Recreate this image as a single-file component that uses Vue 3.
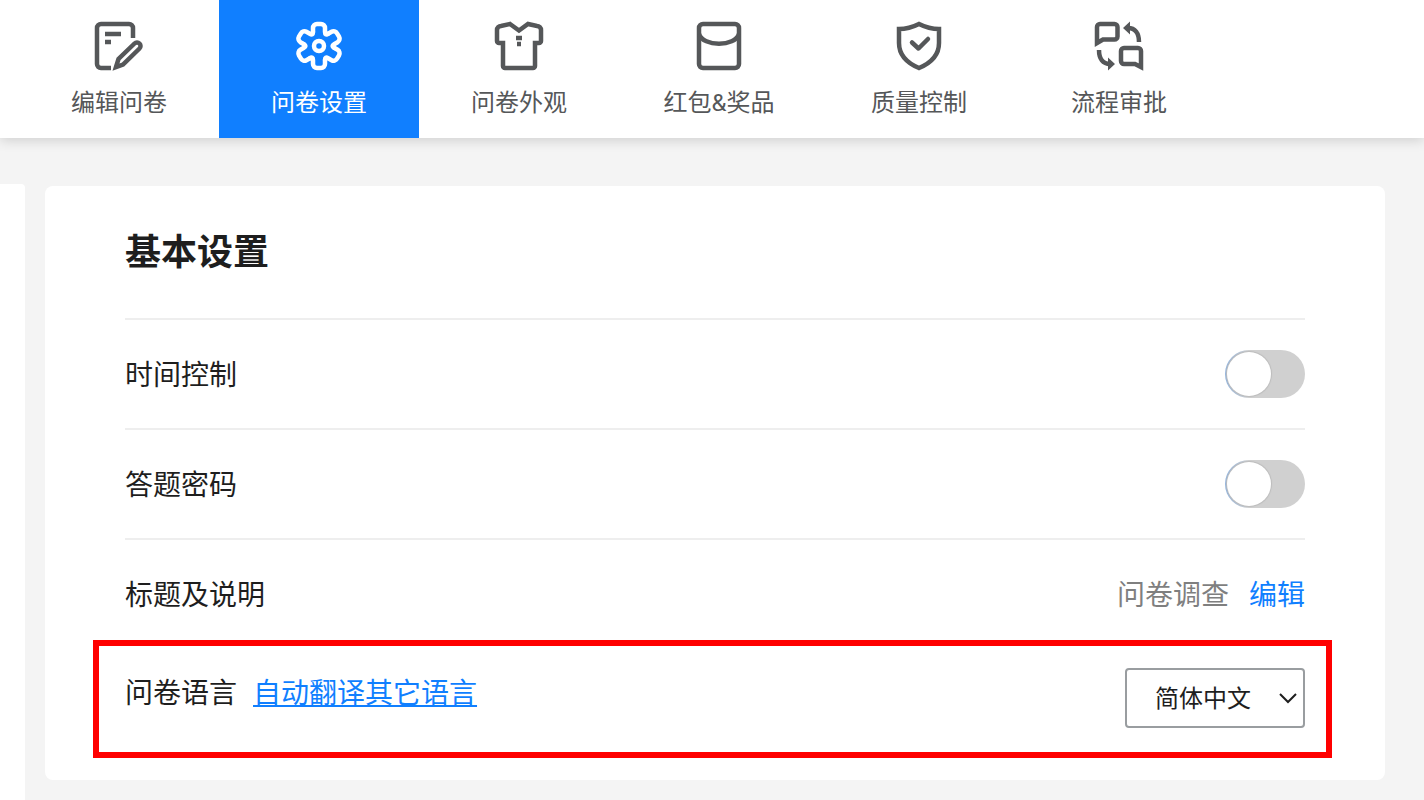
<template>
  <div class="page">
    <nav class="tabs">
      <a
        v-for="tab in tabs"
        :key="tab.id"
        href="#"
        class="tab"
        :class="{ active: tab.id === activeTab }"
        @click.prevent="activeTab = tab.id"
      >
        <svg class="tab-icon" viewBox="0 0 48 48" stroke-width="4.5" aria-hidden="true">
          <g v-if="tab.id === 'edit'">
            <path d="M38 16V6a4 4 0 0 0-4-4H6a4 4 0 0 0-4 4v36a4 4 0 0 0 4 4h10" />
            <path d="M10 12h16M10 20h6" />
            <path d="M21 45l2.500-8 16-15.500a3.500 3.500 0 0 1 5 5L28 42.500z" />
          </g>
          <g v-else-if="tab.id === 'settings'" class="round">
            <path
              v-for="n in 6"
              :key="n"
              :transform="`rotate(${n * 60} 24 24)`"
              d="M18 10V6a4 4 0 0 1 4-4h4a4 4 0 0 1 4 4v4Q30 13.600 33.100 11.800"
            />
            <circle cx="24" cy="24" r="5" />
          </g>
          <g v-else-if="tab.id === 'look'">
            <path d="M15 2l9 6.500L33 2l9 2a4 4 0 0 1 4 4v11a2 2 0 0 1-2 2h-4v23a2 2 0 0 1-2 2H10a2 2 0 0 1-2-2V21H4a2 2 0 0 1-2-2V8a4 4 0 0 1 4-4z" />
            <path d="M21 16h6M22 22h4" />
          </g>
          <g v-else-if="tab.id === 'prize'">
            <rect x="4" y="2" width="40" height="44" rx="4" />
            <path d="M4 12C8 25 40 25 44 12" />
          </g>
          <g v-else-if="tab.id === 'quality'">
            <path d="M24 2C18 5 11 7 4 7v14c0 13 8 20 20 25 12-5 20-12 20-25V7c-7 0-14-2-20-5z" />
            <path class="round" d="M17 20.500l6.500 6L33 17" />
          </g>
          <g v-else>
            <path d="M2 21V5a3 3 0 0 1 3-3h14.500a3 3 0 0 1 3 3v9.500a3 3 0 0 1-3 3H8z" />
            <path d="M46 45V29a3 3 0 0 0-3-3H29a3 3 0 0 0-3 3v10a3 3 0 0 0 3 3h11z" />
            <path d="M33 6c7 0 11 5 11 14M4 28c0 9 4 14 11 14" />
            <path class="solid" d="M28 6l7-6.500v13zM20 42l-7-6.500v13z" />
          </g>
        </svg>
        <span class="tab-label">{{ tab.label }}</span>
      </a>
    </nav>

    <div class="body">
      <aside class="side"></aside>

      <main class="card">
        <h1 class="title">基本设置</h1>

        <div v-for="item in switches" :key="item.id" class="row">
          <label :for="item.id">{{ item.label }}</label>
          <input :id="item.id" v-model="item.on" type="checkbox" class="switch" />
        </div>

        <div class="row row-title">
          <span>标题及说明</span>
          <div class="row-value">
            <span class="muted">问卷调查</span>
            <a href="#" class="link">编辑</a>
          </div>
        </div>

        <div class="highlight">
          <div class="lang-label">
            <label for="lang">问卷语言</label>
            <a href="#" class="link underline">自动翻译其它语言</a>
          </div>
          <div class="select-wrap">
            <select id="lang" v-model="lang">
              <option value="zh-CN">简体中文</option>
              <option value="en">English</option>
            </select>
            <svg class="chevron" viewBox="0 0 18 12" aria-hidden="true">
              <path d="M1 2l8 8 8-8" />
            </svg>
          </div>
        </div>
      </main>
    </div>
  </div>
</template>

<script setup>
import { ref } from 'vue'

const tabs = [
  { id: 'edit', label: '编辑问卷' },
  { id: 'settings', label: '问卷设置' },
  { id: 'look', label: '问卷外观' },
  { id: 'prize', label: '红包&奖品' },
  { id: 'quality', label: '质量控制' },
  { id: 'flow', label: '流程审批' }
]

const activeTab = ref('settings')
const lang = ref('zh-CN')

const switches = ref([
  { id: 'time-control', label: '时间控制', on: false },
  { id: 'password', label: '答题密码', on: false }
])
</script>

<style>
body {
  background: #f4f4f4;
}
</style>

<style scoped>
.page {
  display: flex;
  flex-direction: column;
  min-height: 100vh;
  color: #1e1e1e;
  font-family: "Noto Sans CJK SC", sans-serif;
  font-size: 28px;
  line-height: 46px;
}

/* ── Top tabs ── */
.tabs {
  display: flex;
  padding-left: 19px;
  background: #fff;
  box-shadow: 0 2px 12px rgba(0, 0, 0, 0.16);
}

.tab {
  box-sizing: border-box;
  display: flex;
  flex-direction: column;
  align-items: center;
  gap: 15px;
  width: 200px;
  padding: 22px 0 17px;
  color: #555759;
  font-family: Roboto, "Noto Sans CJK SC", sans-serif;
  font-size: 24px;
  line-height: 36px;
  text-decoration: none;
}

.tab.active {
  background: #107fff;
  color: #fff;
}

.tab-icon {
  width: 48px;
  height: 48px;
  overflow: visible;
  fill: none;
  stroke: currentColor;
}

.round {
  stroke-linecap: round;
  stroke-linejoin: round;
}

.solid {
  fill: currentColor;
  stroke: none;
}

/* ── Body ── */
.body {
  display: flex;
  flex: 1;
  align-items: flex-start;
  gap: 20px;
  padding: 46px 39px 0 0;
}

.side {
  align-self: stretch;
  width: 25px;
  background: #fff;
  border-radius: 0 4px 0 0;
}

.card {
  flex: 1;
  margin: 2px 0 20px;
  padding: 0 80px 22px;
  background: #fff;
  border-radius: 8px;
}

.title {
  margin: 0;
  padding: 40px 0 46px;
  font-size: 36px;
  font-weight: 700;
}

.row {
  display: flex;
  align-items: flex-start;
  justify-content: space-between;
  padding: 30px 0;
  border-top: 2px solid #eee;
}

.row-title {
  padding-bottom: 24px;
}

.row-value {
  display: flex;
  gap: 20px;
}

.muted {
  color: #7f7f7f;
}

.link {
  color: #107fff;
  text-decoration: none;
}

.underline {
  text-decoration: underline;
}

/* ── Switch ── */
.switch {
  appearance: none;
  box-sizing: border-box;
  width: 80px;
  height: 48px;
  margin: 0;
  padding: 2px;
  border-radius: 24px;
  background: linear-gradient(to right, #8db2df, #d0d0d0 24px);
}

.switch::before {
  content: '';
  display: block;
  width: 44px;
  height: 44px;
  border-radius: 50%;
  background: #fff;
  box-shadow: 0 0 1px 1px #bcbcbc;
}

.switch:checked {
  background: #107fff;
}

.switch:checked::before {
  margin-left: 32px;
}

/* ── Language ── */
.highlight {
  display: flex;
  align-items: flex-start;
  justify-content: space-between;
  margin: 0 -27px 0 -32px;
  padding: 22px 21px 24px 26px;
  border: 6px solid #f00;
}

.lang-label {
  display: flex;
  gap: 16px;
}

.select-wrap {
  position: relative;
  display: flex;
}

select {
  appearance: none;
  box-sizing: border-box;
  width: 180px;
  height: 60px;
  padding: 0 44px 4px 28px;
  border: 2px solid #999da0;
  border-radius: 4px;
  background: #fff;
  color: #1e1e1e;
  font-family: inherit;
  font-size: 24px;
}

.chevron {
  position: absolute;
  top: 24px;
  right: 8px;
  width: 18px;
  height: 12px;
  fill: none;
  stroke: #1e1e1e;
  stroke-width: 2;
  pointer-events: none;
}
</style>
